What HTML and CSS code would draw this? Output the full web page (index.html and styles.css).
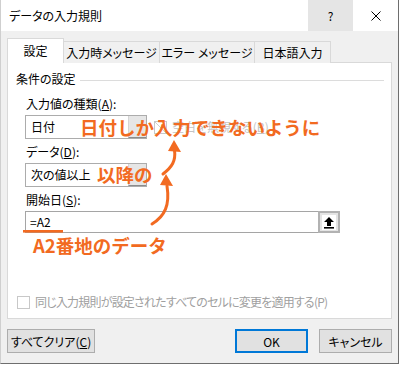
FILE: index.html
```html
<!DOCTYPE html>
<html lang="ja">
<head>
  <meta charset="UTF-8">
  <title>データの入力規則</title>
  <link rel="stylesheet" href="styles.css">
</head>
<body>
  <div class="dialog">
    <div class="titlebar">
      <span class="title">データの入力規則</span>
      <span class="tb-btn help">?</span>
      <span class="tb-btn close">
        <svg width="10" height="10" viewBox="0 0 10 10"><path d="M0.5 0.5L9.5 9.5M9.5 0.5L0.5 9.5" stroke="#000" stroke-width="1"/></svg>
      </span>
    </div>

    <div class="body">
      <div class="tabs">
        <div class="tab active w1">設定</div>
        <div class="tab w2">入力時メッセージ</div>
        <div class="tab w3">エラー メッセージ</div>
        <div class="tab w4">日本語入力</div>
      </div>

      <div class="panel">
        <div class="group-title"><span>条件の設定</span><span class="rule"></span></div>

        <div class="field-label">入力値の種類(<u>A</u>):</div>
        <div class="row">
          <div class="combo"><span class="value">日付</span><span class="drop"></span></div>
          <div class="check faded"><span class="box checked"></span>空白を無視する(<u>B</u>)</div>
        </div>

        <div class="field-label">データ(<u>D</u>):</div>
        <div class="combo"><span class="value">次の値以上</span><span class="drop"></span></div>

        <div class="field-label">開始日(<u>S</u>):</div>
        <div class="refedit">
          <span class="ref-input">=A2</span>
          <span class="ref-btn">
            <svg width="10" height="12" viewBox="0 0 10 12"><path d="M5 0L10 5H7V9H3V5H0Z" fill="#000"/><rect x="0" y="10" width="10" height="1.6" fill="#000"/></svg>
          </span>
        </div>

        <div class="check faded bottom"><span class="box"></span><span class="tight">同じ入力規則が設定されたすべてのセルに変更を適用する(P)</span></div>
      </div>

      <div class="footer">
        <button class="btn clear">すべてクリア(<u>C</u>)</button>
        <span class="spacer"></span>
        <button class="btn ok">OK</button>
        <button class="btn">キャンセル</button>
      </div>
    </div>

    <!-- annotations -->
    <svg class="marks" width="400" height="365" viewBox="0 0 400 365">
      <rect x="23" y="230" width="40" height="2.6" fill="#f26a21"/>
      <path d="M163 174C172 167 176 161 174.5 150" stroke="#f26a21" stroke-width="3" fill="none" stroke-linecap="round"/>
      <path d="M174 140L181 152L168 151Z" fill="#f26a21"/>
      <path d="M152 224C165 216 170 205 167 186" stroke="#f26a21" stroke-width="3" fill="none" stroke-linecap="round"/>
      <path d="M166 174L173 186L160 185Z" fill="#f26a21"/>
    </svg>
    <div class="note n1">日付しか入力できないように</div>
    <div class="note n2">以降の</div>
    <div class="note n3">A2番地のデータ</div>
  </div>
</body>
</html>
```

FILE: styles.css
```css
body {
  margin: 0;
  background: #fff;
  font-family: "Noto Sans CJK JP", "Noto Sans", sans-serif;
  font-size: 12px;
  color: #000;
  font-feature-settings: "palt";
}

.dialog {
  position: relative;
  width: 399px;
  height: 364px;
  box-sizing: border-box;
  border-right: 1px solid #6e6e6e;
  border-bottom: 1px solid #6e6e6e;
  border-left: 1px solid #cfcfcf;
  background: #f0f0f0;
  overflow: hidden;
}

.titlebar {
  display: flex;
  align-items: center;
  height: 31px;
  background: #fff;
}

.title {
  flex: 1;
  padding-left: 8px;
  line-height: 16px;
}

.tb-btn {
  width: 45px;
  height: 31px;
  display: flex;
  align-items: center;
  justify-content: center;
}

.help {
  background: #e5e5e5;
  font-size: 12px;
}

.body {
  padding: 8px 6px 0 6px;
}

.tabs {
  display: flex;
  align-items: flex-end;
  height: 24px;
  position: relative;
  z-index: 1;
  margin-bottom: -1px;
}

.tab {
  height: 22px;
  box-sizing: border-box;
  border: 1px solid #d9d9d9;
  border-bottom: none;
  margin-right: -1px;
  display: flex;
  align-items: center;
  justify-content: center;
  background: #f0f0f0;
}

.tab.active {
  height: 25px;
  background: #fff;
  padding-bottom: 1px;
}

.w1 { width: 57px; }
.w2 { width: 97px; }
.w3 { width: 96px; }
.w4 { width: 77px; }

.panel {
  background: #fff;
  border: 1px solid #d9d9d9;
  height: 257px;
  box-sizing: border-box;
  padding: 8px 7px 0 8px;
}

.group-title {
  display: flex;
  align-items: center;
  height: 16px;
  line-height: 16px;
}

.group-title .rule {
  flex: 1;
  height: 1px;
  background: #dcdcdc;
  margin: 3px 0 0 4px;
}

.field-label {
  margin: 9px 0 0 10px;
  line-height: 16px;
}

.field-label + .row,
.field-label + .combo,
.field-label + .refedit {
  margin-top: 3px;
}

.combo + .field-label,
.row + .field-label {
  margin-top: 5px;
}

.row {
  display: flex;
  align-items: center;
}

.combo {
  margin-left: 9px;
  width: 122px;
  height: 24px;
  box-sizing: border-box;
  border: 1px solid #acacac;
  display: flex;
}

.combo .value {
  flex: 1;
  padding-left: 5px;
  line-height: 22px;
}

.combo .drop {
  width: 17px;
  background: #e6e6e6;
  border-left: 1px solid #d5d5d5;
  border-bottom: 1px solid #8c8c8c;
}

.check {
  display: flex;
  align-items: center;
  line-height: 16px;
}

.check .box {
  width: 11px;
  height: 11px;
  border: 1px solid #c8c8c8;
  background: #fff;
  margin-right: 5px;
}

.check .box.checked {
  background: linear-gradient(45deg, transparent 46%, #d0d0d0 46%, #d0d0d0 54%, transparent 54%);
}

.faded {
  color: #a0a0a0;
}

.row .check {
  margin-left: 7px;
  color: #c4c4c4;
}

.refedit {
  margin-left: 9px;
  width: 315px;
  height: 22px;
  display: flex;
}

.ref-input {
  flex: 1;
  border: 1px solid #a5a5a5;
  border-right: none;
  padding-left: 4px;
  line-height: 20px;
}

.ref-btn {
  width: 22px;
  box-sizing: border-box;
  border: 2px solid #b2b2b2;
  background: #e4e4e4;
  display: flex;
  align-items: center;
  justify-content: center;
}

.ref-btn svg {
  background: #fff;
  padding: 2px 2px 1px;
}

.check.bottom {
  margin: 61px 0 0 1px;
}

.tight {
  letter-spacing: -0.8px;
}

.footer {
  display: flex;
  margin-top: 10px;
  padding-right: 0;
}

.spacer { flex: 1; }

.btn {
  height: 24px;
  width: 73px;
  font-family: inherit;
  font-size: 12px;
  font-feature-settings: "palt";
  background: #e1e1e1;
  border: 1px solid #adadad;
  padding: 0;
  color: #000;
}

.btn.clear { width: 88px; }

.btn.ok {
  border: 2px solid #0078d7;
  margin-right: 11px;
}

.marks {
  position: absolute;
  left: -1px;
  top: 0;
  pointer-events: none;
}

.note {
  position: absolute;
  color: #f26a21;
  font-weight: 700;
  font-size: 18.5px;
  line-height: 20px;
  font-feature-settings: normal;
  white-space: nowrap;
}

.n1 { left: 79px; top: 117px; }
.n2 { left: 96px; top: 164px; }
.n3 { left: 32px; top: 235px; }
```
